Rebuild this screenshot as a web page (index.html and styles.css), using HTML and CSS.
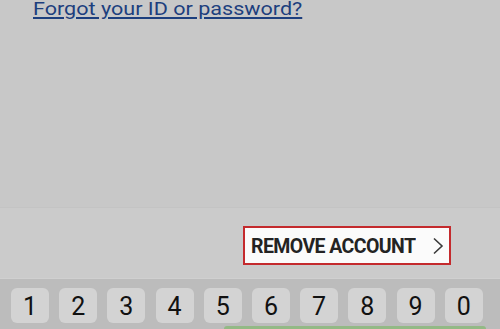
FILE: index.html
```html
<!DOCTYPE html>
<html>
<head>
<meta charset="utf-8">
<link rel="stylesheet" href="styles.css">
</head>
<body>
<div class="screen">
  <div class="top">
    <a class="link" href="#">Forgot your ID or password?</a>
  </div>
  <div class="band">
    <div class="remove">
      <span class="remove-label">REMOVE ACCOUNT</span>
      <svg class="chev" width="12" height="18" viewBox="0 0 12 18"><path d="M2 1.5 L10 9 L2 16.5" fill="none" stroke="#3a3a3a" stroke-width="1.6"/></svg>
    </div>
  </div>
  <div class="keyboard">
    <div class="keys">
      <div class="key">1</div><div class="key">2</div><div class="key">3</div><div class="key">4</div><div class="key">5</div><div class="key">6</div><div class="key">7</div><div class="key">8</div><div class="key">9</div><div class="key">0</div>
    </div>
    <div class="next-row"><div class="green"></div></div>
  </div>
</div>
</body>
</html>
```
FILE: styles.css
```css
html, body {
  margin: 0;
  padding: 0;
}
body {
  width: 500px;
  height: 329px;
  overflow: hidden;
  background: #c8c8c8;
  font-family: Roboto, "Liberation Sans", sans-serif;
}
.screen {
  display: flex;
  flex-direction: column;
  height: 329px;
}
.top {
  flex: 1;
  padding-left: 33px;
}
.link {
  display: inline-block;
  margin-top: -3px;
  font-size: 18.6px;
  line-height: 20px;
  color: #1d3f7e;
  text-decoration: underline;
  text-decoration-thickness: 1.5px;
  text-underline-offset: 2px;
  transform: scaleX(1.16);
  transform-origin: left top;
  white-space: nowrap;
}
.band {
  height: 71px;
  background: #cbcbcb;
  border-top: 1px solid #c4c4c4;
  display: flex;
  justify-content: flex-end;
  align-items: flex-start;
  padding-top: 18px;
  padding-right: 49px;
  box-sizing: border-box;
}
.remove {
  width: 208px;
  height: 39px;
  box-sizing: border-box;
  border: 2.5px solid #c42a2d;
  background: #fbfbfb;
  display: flex;
  align-items: center;
  padding-left: 6px;
  padding-right: 4px;
}
.remove-label {
  flex: 1;
  font-weight: 700;
  font-size: 20px;
  letter-spacing: -0.6px;
  color: #232323;
  transform: scaleX(0.975);
  transform-origin: left center;
  white-space: nowrap;
}
.chev {
  display: block;
  margin-right: 1px;
}
.keyboard {
  height: 51px;
  background: #bcbcbc;
  border-top: 1px solid #d0d0d0;
  box-sizing: border-box;
  display: flex;
  flex-direction: column;
  padding-top: 9px;
}
.keys {
  display: flex;
  gap: 10.2px;
  padding-left: 11px;
}
.key {
  width: 38px;
  height: 35px;
  background: #d3d3d3;
  border-radius: 6px;
  font-size: 25px;
  line-height: 37px;
  text-align: center;
  color: #111;
  flex: none;
}
.next-row {
  padding-left: 224px;
  padding-top: 3px;
}
.green {
  width: 262px;
  height: 6px;
  background: #93b985;
  border-radius: 3px 3px 0 0;
}
```
